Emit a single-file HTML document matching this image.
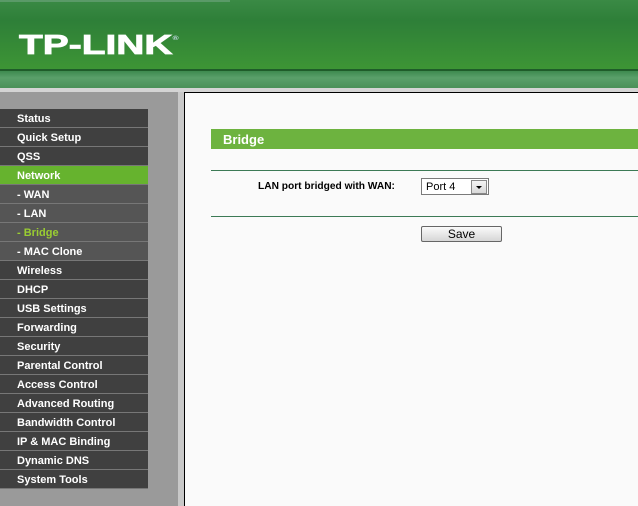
<html><head><style>
body{margin:0;width:638px;height:506px;overflow:hidden;font-family:"Liberation Sans",Arial,sans-serif;background:#fafafa;position:relative}
.a{position:absolute}
.m{position:absolute;left:0;width:148px;height:18px;border-bottom:1px solid #777;background:#404040;color:#fff;font-size:11px;font-weight:bold;line-height:20px;text-indent:17px}
</style></head><body>
<div class="a" style="left:0;top:0;width:638px;height:69px;background:linear-gradient(#3a8a45,#2e7f38 30%,#3d9535)"></div>
<div class="a" style="left:0;top:0;width:230px;height:2px;background:#5a9a68"></div>
<div class="a" style="left:19px;top:24px;color:#fff;font-size:28px;line-height:30px;font-weight:bold;font-family:'Liberation Sans',sans-serif;transform:scaleX(1.39);transform-origin:left;letter-spacing:0px;-webkit-text-stroke:0.8px #fff">TP-LINK<sup style="font-size:6px;vertical-align:14px;-webkit-text-stroke:0;color:#cde">®</sup></div>
<div class="a" style="left:0;top:69px;width:638px;height:2px;background:#1f5c2a"></div>
<div class="a" style="left:0;top:71px;width:638px;height:17px;background:linear-gradient(#3e8a4f,#5aa06a 40%,#4a9058)"></div>
<div class="a" style="left:0;top:88px;width:638px;height:4px;background:#d4d4d4"></div>
<div class="a" style="left:0;top:92px;width:178px;height:414px;background:#9a9a9a"></div>
<div class="a" style="left:178px;top:92px;width:6px;height:414px;background:#c8c8c8"></div>
<div class="a" style="left:184px;top:92px;width:1px;height:414px;background:#000"></div>
<div class="a" style="left:184px;top:92px;width:454px;height:1px;background:#000"></div>
<div class="m" style="top:109px">Status</div>
<div class="m" style="top:128px">Quick Setup</div>
<div class="m" style="top:147px">QSS</div>
<div class="m" style="top:166px;background:#66b32e">Network</div>
<div class="m" style="top:185px;background:#555">- WAN</div>
<div class="m" style="top:204px;background:#555">- LAN</div>
<div class="m" style="top:223px;background:#555;color:#9acd32">- Bridge</div>
<div class="m" style="top:242px;background:#555">- MAC Clone</div>
<div class="m" style="top:261px">Wireless</div>
<div class="m" style="top:280px">DHCP</div>
<div class="m" style="top:299px">USB Settings</div>
<div class="m" style="top:318px">Forwarding</div>
<div class="m" style="top:337px">Security</div>
<div class="m" style="top:356px">Parental Control</div>
<div class="m" style="top:375px">Access Control</div>
<div class="m" style="top:394px">Advanced Routing</div>
<div class="m" style="top:413px">Bandwidth Control</div>
<div class="m" style="top:432px">IP &amp; MAC Binding</div>
<div class="m" style="top:451px">Dynamic DNS</div>
<div class="m" style="top:470px">System Tools</div>
<div class="a" style="left:211px;top:129px;width:427px;height:20px;background:#6db33f;color:#fff;font-size:13px;font-weight:bold;line-height:21px;text-indent:12px">Bridge</div>
<div class="a" style="left:211px;top:170px;width:427px;height:1px;background:#3c7a55"></div>
<div class="a" style="left:211px;top:216px;width:427px;height:1px;background:#3c7a55"></div>
<div class="a" style="left:258px;top:181px;font-size:10.2px;font-weight:bold;color:#000">LAN port bridged with WAN:</div>
<div class="a" style="left:421px;top:178px;width:66px;height:15px;border:1px solid #7a7a7a;background:#fff;font-size:11px;line-height:16px;text-indent:4px">Port 4
<div class="a" style="right:1px;top:1px;width:14px;height:12px;border:1px solid #888;background:linear-gradient(#f4f4f4,#d8d8d8)"><div class="a" style="left:4px;top:5px;border-left:3px solid transparent;border-right:3px solid transparent;border-top:3px solid #000"></div></div></div>
<div class="a" style="left:421px;top:226px;width:79px;height:14px;border:1px solid #666;border-radius:2px;background:linear-gradient(#fafafa,#d6d6d6);font-size:12px;line-height:15px;text-align:center">Save</div>
</body></html>
